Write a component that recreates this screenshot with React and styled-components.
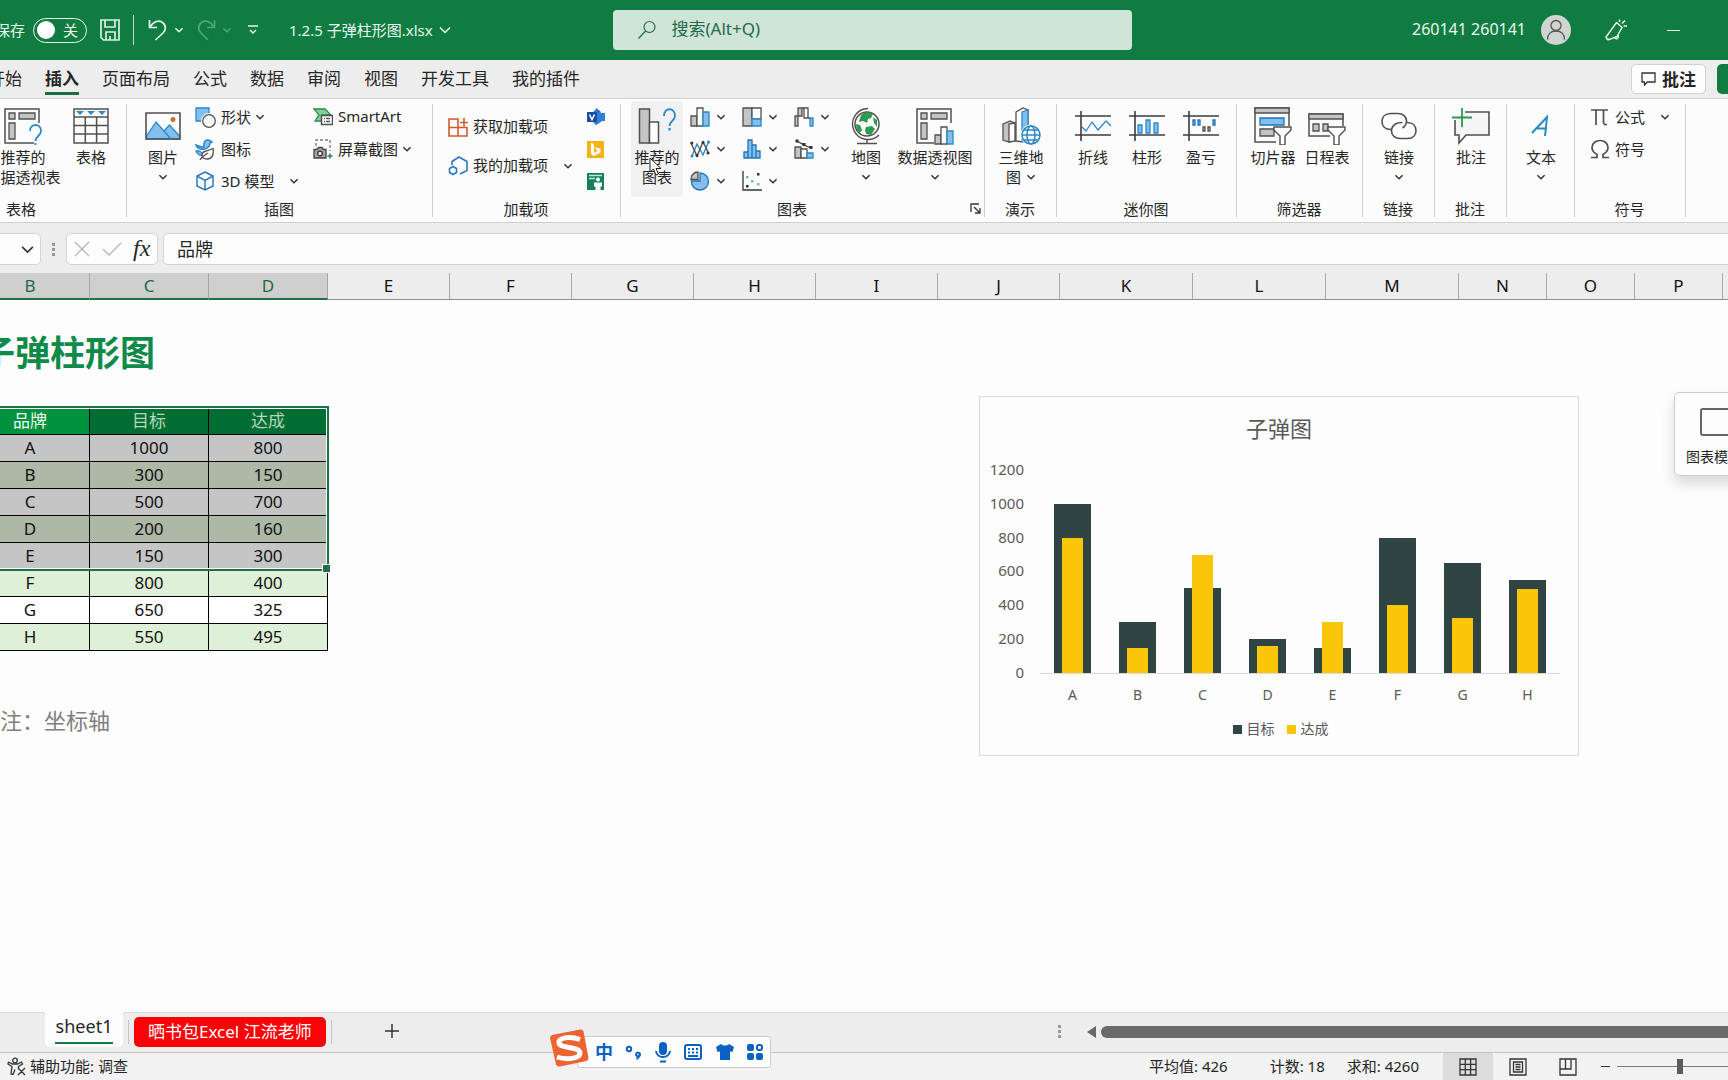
import React, { useState } from 'react';
import styled, { createGlobalStyle, css } from 'styled-components';

const GlobalStyle = createGlobalStyle`
  * {
    box-sizing: border-box;
  }

  body {
    margin: 0;
    overflow: hidden;
    font-family: 'Noto Sans', 'Noto Sans CJK SC', sans-serif;
    font-size: 15px;
    color: #262626;
  }

  button, input {
    font: inherit;
    color: inherit;
    margin: 0;
    padding: 0;
    border: 0;
    background: none;
  }

  svg {
    display: block;
    flex: none;
  }
`;

const GREEN = '#107c41';
const BLUE = '#2b88c8';
const SKY = '#83beec';
const INK = '#505050';
const GREY = '#c4c4c4';

/* ---------- data ---------- */

const tabs = ['开始', '插入', '页面布局', '公式', '数据', '审阅', '视图', '开发工具', '我的插件'];

const columns = [
  ['B', 119], ['C', 119], ['D', 119],
  ['E', 122], ['F', 122], ['G', 122], ['H', 122], ['I', 122], ['J', 122],
  ['K', 133], ['L', 133], ['M', 133],
  ['N', 88], ['O', 88], ['P', 88], ['Q', 88],
];

const brands = [
  { name: 'A', target: 1000, actual: 800 },
  { name: 'B', target: 300, actual: 150 },
  { name: 'C', target: 500, actual: 700 },
  { name: 'D', target: 200, actual: 160 },
  { name: 'E', target: 150, actual: 300 },
  { name: 'F', target: 800, actual: 400 },
  { name: 'G', target: 650, actual: 325 },
  { name: 'H', target: 550, actual: 495 },
];

const AXIS_MAX = 1200;
const ticks = [1200, 1000, 800, 600, 400, 200, 0];
const selectedRows = 5;

/* ---------- icons ---------- */

const Svg = ({ w = 20, h = w, children, ...rest }) => (
  <svg width={w} height={h} viewBox={`0 0 ${w} ${h}`} fill="none" stroke={INK} strokeWidth="1.3" aria-hidden="true" {...rest}>
    {children}
  </svg>
);

const Chevron = ({ size = 10, color = '#333' }) => (
  <svg width={size} height={size} viewBox="0 0 10 10" fill="none" stroke={color} strokeWidth={size > 10 ? 1.1 : 1.5} aria-hidden="true">
    <path d="M1.4 3.2 5 6.8l3.6-3.6" />
  </svg>
);

const SaveIcon = () => (
  <Svg w={22} h={24} stroke="#d9f0e2" strokeWidth="1.7">
    <path d="M2 2h18v20H4.5L2 19.5zM6 2v7h10V2M7 22v-8h9v8M11 18v4" />
  </Svg>
);

const UndoIcon = () => (
  <Svg w={20} h={24} stroke="#e4f5ea" strokeWidth="1.7">
    <path d="M1.500 2v7.500H9M2 9C6 3 11 2 14.500 4.500 18.500 7.500 18 12 15 15l-7.500 7" />
  </Svg>
);

const RedoIcon = () => (
  <Svg w={20} h={24} stroke="#4fa677" strokeWidth="1.7">
    <path d="M18.500 2v7.500H11M18 9C14 3 9 2 5.500 4.500 1.500 7.500 2 12 5 15l7 7" />
  </Svg>
);

const MoreIcon = () => (
  <Svg w={12} h={12} stroke="#e4f5ea" strokeWidth="1.5">
    <path d="M1 2h10M3 6l3 3 3-3" />
  </Svg>
);

const SearchIcon = () => (
  <Svg w={20} h={20} stroke="#2a6b4a" strokeWidth="1.2">
    <circle cx="12.500" cy="7" r="5.500" />
    <path d="M8.500 11 1.500 18.500" />
  </Svg>
);

const PersonIcon = () => (
  <Svg w={30} stroke="#555">
    <circle cx="15" cy="10.500" r="5" />
    <path d="M6.500 24.500c0-5.500 3.500-8.500 8.500-8.500s8.500 3 8.500 8.500" />
  </Svg>
);

const PenIcon = () => (
  <Svg w={22} h={22} stroke="#e4f5ea" strokeWidth="1.5">
    <path d="M11.500 3.500 17 8.500l-5 9-7.500 3-2.500-.5-1-2zM4.500 20.500c-1.500 1-3-.5-3-2M9.500 18.500c1.500 2.500 4.500 1 3.500-2.500M14.500 3V0.500M17 4.500l3-3M18.500 7H22" />
  </Svg>
);

const CommentIcon = () => (
  <Svg w={15} h={14} stroke="#333">
    <path d="M1 1h13v9H6.500L3.500 13v-3H1z" />
  </Svg>
);

const PivotRecommendIcon = () => (
  <Svg w={39} h={38}>
    <path d="M30 36H1V2h34v14" strokeWidth="1.500" />
    <g fill={GREY}>
      <path d="M5 6h6v6H5zM15 6h16v6H15zM5 16h6v16H5z" />
    </g>
    <path d="M26 24c0-8 11-8 11 0 0 5-5.500 5-5.500 10" stroke={BLUE} strokeWidth="1.800" />
    <path d="M31.500 36v2" stroke={BLUE} strokeWidth="2" />
  </Svg>
);

const TableIcon = () => (
  <Svg w={36} h={36}>
    <path d="M1 1h34v34H1zM1 9h34M1 17.500h34M1 26h34M12.300 9v26M23.600 9v26" strokeWidth="1.500" />
    <path d="M3 3h8l-4 4zM14 3h8l-4 4zM25 3h8l-4 4z" fill={BLUE} stroke="none" />
  </Svg>
);

const PictureIcon = () => (
  <Svg w={36} h={28}>
    <path d="M1.500 24 11 10l8 9 5.500-6 10 11v3h-33z" fill={SKY} stroke={BLUE} />
    <path d="M1 1h34v26H1z" strokeWidth="1.600" />
    <circle cx="28" cy="7.500" r="2.500" fill="#c9702a" stroke="none" />
    <path d="M19 19l7 8" stroke={BLUE} />
  </Svg>
);

const ShapesIcon = () => (
  <Svg w={21}>
    <path d="M1 1h13v13H1z" fill={SKY} stroke={BLUE} />
    <circle cx="14" cy="14" r="8" fill="#fcfcfc" stroke="none" />
    <circle cx="14" cy="14" r="6.300" />
  </Svg>
);

const BirdIcon = () => (
  <Svg w={21}>
    <path d="M1 6c2 1 5 2 8 2 0-3-1-6 3-7 3-.500 4 1 5 2l-2 1c0 4-2 5-5 6-4 1-8-1-9-4z" fill={SKY} stroke={BLUE} strokeWidth="1.500" />
    <path d="M1 12c3-1 6 1 7 4-3 1-6-1-7-4z" fill={SKY} stroke={BLUE} />
    <path d="M18 9.500c1 7-1 10.500-6 10.500-4 0-5-2-5-4 0-5 6-3.500 11-6.500zM5 21c2-4 5-5 8-7" fill="#fcfcfc" />
  </Svg>
);

const CubeIcon = () => (
  <Svg w={21} h={20} stroke="#2b79c2" strokeWidth="1.500">
    <path d="M10 1l8 4v10l-8 4-8-4V5zM2 5l8 4.500L18 5M10 9.500V19" />
  </Svg>
);

const SmartArtIcon = () => (
  <Svg w={20}>
    <path d="M1 2h11l6 6h-9v6H2l4-6z" fill="#7fd09b" stroke="#2d8a4e" />
    <path d="M8.500 8.500h11v9h-11z" fill="#fff" strokeWidth="1.500" />
    <path d="M11 11.500h1M13 11.500h4M11 14.500h1M13 14.500h4" />
  </Svg>
);

const ScreenshotIcon = () => (
  <Svg w={20}>
    <path d="M3 7V1h14v11" strokeDasharray="3 2" stroke="#777" />
    <path d="M1 10.500h3l1.500-2H9l1.500 2H13V19H1z" fill="#a5a5a5" stroke="#444" />
    <circle cx="7" cy="14.500" r="2.300" fill="#eee" stroke="#333" />
    <path d="M14.500 17h5M17 14.500v5" stroke="#2d8a4e" strokeWidth="1.600" />
  </Svg>
);

const AddInIcon = () => (
  <Svg w={20} stroke="#d05a2c" strokeWidth="1.600">
    <path d="M1 2h9v17H1zM1 10.500h18V19H10V2M12 5.500h8M16 1v8.500" />
  </Svg>
);

const MyAddInIcon = () => (
  <Svg w={20} stroke="#2b79c2" strokeWidth="1.600">
    <path d="M4 9V5.500L11 1l8 4.500v9L12 18M5 10.500l3.500 2v4L5 18.500l-3.500-2v-4z" />
  </Svg>
);

const VisioIcon = () => (
  <Svg w={18} stroke="none">
    <path d="M9 0l5 4-5 4zM9 17l6-4-6-4z" fill="#1b4fa3" />
    <path d="M9 1l5 4h4v8h-4l-5 4-3-3V4z" fill="#2f7fd6" />
    <path d="M0 4h10v10H0z" fill="#1a4fa0" />
    <path d="M2.500 6.500l2.500 5 2.500-5" stroke="#fff" strokeWidth="1.500" />
  </Svg>
);

const BingIcon = () => (
  <Svg w={17} stroke="none">
    <path d="M0 0h17v17H0z" fill="#f5b21b" />
    <path d="M4 2l3 1v9l4-2.500-2-1-1-2.500 5.500 2v3.500L7 15l-3-2z" fill="#fff" />
  </Svg>
);

const PeopleGraphIcon = () => (
  <Svg w={17} stroke="none">
    <path d="M0 0h17v17H0z" fill="#14805e" />
    <path d="M2 2.500h13M2 5.500h6" stroke="#bfe6d5" strokeWidth="1.400" />
    <circle cx="11" cy="6.500" r="2" fill="#fff" />
    <path d="M7 9.500h8v4h-1.500V17H8.500v-3.500H7z" fill="#fff" />
  </Svg>
);

const ChartRecommendIcon = () => (
  <Svg w={38} h={38}>
    <path d="M1.500 2h10v34h-10z" fill={GREY} strokeWidth="1.500" />
    <path d="M11.500 15h9v21h-9z" fill="#fcfcfc" strokeWidth="1.500" />
    <path d="M26 9c0-9 11-9 11 0 0 5-5.500 5-5.500 10" stroke={BLUE} strokeWidth="1.800" />
    <path d="M31.500 21v2.500" stroke={BLUE} strokeWidth="2.200" />
  </Svg>
);

const ColumnIcon = () => (
  <Svg w={20}>
    <path d="M1 9h6v10H1z" fill={GREY} />
    <path d="M7 1h6v18H7z" fill="#fff" />
    <path d="M13 5h6v14h-6z" fill={SKY} stroke={BLUE} />
  </Svg>
);

const TreemapIcon = () => (
  <Svg w={20}>
    <path d="M1 1h9v18H1z" fill={GREY} />
    <path d="M10 1h9v11h-9z" fill="#fff" />
    <path d="M10 12h9v7h-9z" fill={SKY} stroke={BLUE} />
  </Svg>
);

const WaterfallIcon = () => (
  <Svg w={20}>
    <path d="M1 9h3v10H1zM4 1h4v8H4z" fill={GREY} />
    <path d="M10 1h4v10h-4z" fill="#fff" />
    <path d="M8 1h2M14 11h2" />
    <path d="M16 11h3v8h-3z" fill={SKY} stroke={BLUE} />
  </Svg>
);

const LineIcon = () => (
  <Svg w={20}>
    <path d="M2 17l5-12 6 11 6-14" stroke={BLUE} strokeWidth="1.400" />
    <path d="M1 4l6 13 6-14 6 12" strokeWidth="1.400" />
    <g fill="#333" stroke="none">
      <circle cx="1.800" cy="4" r="1.500" /><circle cx="7" cy="16.500" r="1.500" />
      <circle cx="13" cy="3.500" r="1.500" /><circle cx="18" cy="14" r="1.500" />
    </g>
    <g fill={BLUE} stroke="none">
      <circle cx="2" cy="17" r="1.500" /><circle cx="18.500" cy="3" r="1.500" />
    </g>
  </Svg>
);

const HistogramIcon = () => (
  <Svg w={20} stroke="#1f73b8">
    <path d="M2 13h4v6H2zM6 1h4v18H6zM10 6h4v13h-4zM14 12h4v7h-4z" fill={SKY} />
  </Svg>
);

const ComboIcon = () => (
  <Svg w={20}>
    <path d="M1 8h6v11H1z" fill={GREY} />
    <path d="M7 10h6v9H7z" fill="#fff" />
    <path d="M13 14h6v5h-6z" fill={SKY} stroke={BLUE} />
    <path d="M3 2l7 4 7 3" stroke="#333" />
    <path d="M1.500 0.500h3v3h-3zM8.500 4h3v3h-3zM15.500 7h3v3h-3z" fill="#333" stroke="none" />
  </Svg>
);

const PieIcon = () => (
  <Svg w={20}>
    <path d="M10 10V2a8.500 8.500 0 1 1-8.500 8z" fill={SKY} stroke="#1f73b8" />
    <path d="M8 8.500H1C1 4 4 1 8 1z" fill={GREY} />
  </Svg>
);

const ScatterIcon = () => (
  <Svg w={20}>
    <path d="M1 0v19h19" stroke="#333" />
    <g fill="#333" stroke="none">
      <path d="M4 14h2.500v2.500H4zM15 2h2.500v2.500H15z" />
    </g>
    <g fill="#7db4c8" stroke="none">
      <path d="M4 5h2.500v2.500H4zM9 9h2.500v2.500H9zM15 12h2.500v2.500H15z" />
    </g>
  </Svg>
);

const GlobeIcon = () => (
  <Svg w={30} h={38}>
    <circle cx="16" cy="17" r="12" strokeWidth="1.500" />
    <g fill="#2f9a51" stroke="none">
      <path d="M10 8c4-3 9-3 12-1l-2 4-3 1-1 4-4-2-4 1zM22 10l4 3v7l-3-4zM5 17l4 1 2 5-2 3c-3-2-4-5-4-9zM15 20l6-1 3 3-4 6-5-1-1-4z" />
    </g>
    <path d="M17 1.500A15.500 15.500 0 1 0 28 28M16 32v4M6 36.500h20" strokeWidth="1.400" />
  </Svg>
);

const PivotChartIcon = () => (
  <Svg w={39} h={38}>
    <path d="M18 36H1V2h34v14" strokeWidth="1.500" />
    <g fill={GREY}>
      <path d="M5 6h6v6H5zM15 6h16v6H15zM5 16h6v16H5z" />
      <path d="M19 28h6v9h-6z" />
    </g>
    <path d="M25 20h6v17h-6z" fill="#fff" />
    <path d="M31 24h6v13h-6z" fill={SKY} stroke={BLUE} />
  </Svg>
);

const Map3DIcon = () => (
  <Svg w={39} h={38}>
    <path d="M1 17l7-3 5 2v18l-6 1-6-2z" fill={GREY} />
    <path d="M7 17v18l6-1V16z" fill="#fff" />
    <path d="M14 5l7-4 5 2v20l-5 12-7-1z" fill="#fff" />
    <path d="M20 5l6-2v20l-6 12z" fill={SKY} stroke={BLUE} />
    <circle cx="29" cy="28" r="10.500" fill="#fcfcfc" stroke="none" />
    <g stroke={BLUE} strokeWidth="1.500">
      <circle cx="29" cy="28" r="9" />
      <ellipse cx="29" cy="28" rx="4" ry="9" />
      <path d="M20 28h18M21.500 23h15M21.500 33h15" />
    </g>
  </Svg>
);

const SparkIcon = ({ children }) => (
  <Svg w={36} h={32}>
    <path d="M0 6h36M0 25h36M6 1v30" stroke="#3c3c3c" strokeWidth="1.600" />
    {children}
  </Svg>
);

const SlicerIcon = () => (
  <Svg w={38} h={38}>
    <path d="M22 35H1V1h34v18" strokeWidth="1.500" />
    <path d="M1 1h34v5H1zM6 22h14v7H6z" fill={GREY} />
    <path d="M6 11h24v7H6z" fill={SKY} stroke="#1f73b8" />
    <path d="M20 20h17v3l-6 6v9h-5v-9l-6-6z" fill="#fff" strokeWidth="1.400" />
  </Svg>
);

const TimelineIcon = () => (
  <Svg w={38} h={38}>
    <path d="M22 29H1V7h34v12" strokeWidth="1.500" />
    <path d="M1 7h34v5H1zM5 17h6v7H5zM15 17h5v7h-5z" fill={GREY} />
    <path d="M20 20h17v3l-6 6v9h-5v-9l-6-6z" fill="#fff" strokeWidth="1.400" />
  </Svg>
);

const LinkIcon = () => (
  <Svg w={36} h={28} strokeWidth="1.600">
    <path d="M10 17.500C4 17.500 1 14 1 9.500S4 1.500 9.500 1.500H17c5 0 8.500 3 8.500 7.500 0 3-1.500 5.500-4 7" />
    <path d="M26 10.500c6 0 9 3.500 9 8s-3 8-8.500 8H19c-5 0-8.500-3-8.500-7.500 0-3 1.500-5.500 4-7 2-1.500 4-1.500 7-1.500" />
  </Svg>
);

const NewCommentIcon = () => (
  <Svg w={38} h={38}>
    <path d="M12 5h25v23H14l-7 8v-8H3V13" fill="#f5f5f5" stroke="none" />
    <path d="M13 5h24v23H14l-7 8v-8H3V13" strokeWidth="1.600" />
    <path d="M10 1v19M0 10.500h20" stroke="#2a9a50" strokeWidth="1.800" />
  </Svg>
);

const TextArtIcon = () => (
  <Svg w={20} h={22} stroke={BLUE} strokeWidth="2">
    <path d="M1 18 16 2l-2 19M6 13.500h10" />
  </Svg>
);

const PiIcon = () => (
  <Svg w={20} h={20} strokeWidth="1.700">
    <path d="M1 3h17M6 3v15M13.500 3v12c0 2 1 3 3.500 2.500" />
  </Svg>
);

const OmegaIcon = () => (
  <Svg w={20} h={20} strokeWidth="1.700">
    <path d="M1 18.500h6v-3C3.500 13.500 2 11 2 8.500 2 4.500 5.500 1.500 10 1.500s8 3 8 7c0 2.500-1.500 5-5 7v3h6" />
  </Svg>
);

const LauncherIcon = () => (
  <Svg w={11} h={11} stroke="#333">
    <path d="M1 9V1h8M4 4l6 6M10 5v5H5" />
  </Svg>
);

const PointerIcon = () => (
  <Svg w={13} h={19} stroke="#222" strokeWidth="1">
    <path d="M1 1v14l3.500-3 2.500 6 2.500-1L7 11.500h5z" fill="#fff" />
  </Svg>
);

const AccessIcon = () => (
  <Svg w={20} h={20} stroke="#333">
    <circle cx="8" cy="3.500" r="2.300" />
    <path d="M1.500 5l4 2h5l4-2 1 2-4 2.500V12M1.500 5l-.5 2 4 2.500L4 17l2 .5 2-5M11 11l7 7M18 11l-7 7" />
  </Svg>
);

const SogouLogo = () => (
  <Svg w={40} h={40} stroke="none">
    <path d="M3 7 31 1.500Q34 1 34.500 3.500L39.500 30q0 2-2 3L11 38.500q-3 .5-4-2L1 10q0-2 2-3z" fill="#ec6530" />
    <path d="M31 11.500C20 7.500 9 10 10 15c1 6 21 3 21 10 0 6-14 7-23 4" stroke="#fff" strokeWidth="5" />
  </Svg>
);

const PunctIcon = () => (
  <Svg w={18} h={18} stroke="#0a62c4" strokeWidth="2">
    <circle cx="5" cy="6" r="2.200" />
    <path d="M14 9.500a2 2 0 1 0 .1 0M15.500 11c0 2-1 4-3 5" />
  </Svg>
);

const MicIcon = () => (
  <Svg w={18} h={22} stroke="#0a62c4" strokeWidth="2">
    <rect x="6" y="2" width="6" height="11" rx="3" fill="#0a62c4" />
    <path d="M2 10c1 8 13 8 14 0M6 20.500h6" />
  </Svg>
);

const KeyboardIcon = () => (
  <Svg w={20} h={18} stroke="#0a62c4" strokeWidth="2">
    <rect x="2" y="2" width="16" height="14" rx="2" />
    <path d="M5 6h10M5 9.500h10" strokeDasharray="2 2" />
    <path d="M5 13h10" />
  </Svg>
);

const ShirtIcon = () => (
  <Svg w={20} h={18} stroke="none">
    <path d="M6 1c2 2 6 2 8 0l5 3-1.500 5L15 8.500V17H5V8.500L2.500 9 1 4z" fill="#0a62c4" />
  </Svg>
);

const AppsIcon = () => (
  <Svg w={18} h={18} stroke="none" fill="#0a62c4">
    <rect x="1" y="1" width="7" height="7" rx="2" />
    <rect x="1" y="10" width="7" height="7" rx="2" />
    <rect x="10" y="10" width="7" height="7" rx="2" />
    <rect x="11" y="2" width="5" height="5" rx="2" fill="none" stroke="#0a62c4" strokeWidth="2" />
  </Svg>
);

/* ---------- title bar ---------- */

const Page = styled.div`
  display: flex;
  flex-direction: column;
  height: 100vh;
  overflow: hidden;
  background: #ededed;
`;

/* optical centring of text beside icons */
const Text = styled.span`
  padding-bottom: 2px;
`;

const TitleBar = styled.header`
  display: flex;
  align-items: center;
  height: 60px;
  flex: none;
  background: ${GREEN};
  color: #e8f6ed;
`;

const QuickAccess = styled.div`
  display: flex;
  align-items: center;
  flex: none;
  width: calc(35.5% + 5px);
  margin-left: -5px;
  white-space: nowrap;
`;

const AutoSave = styled.label`
  display: flex;
  align-items: center;
  gap: 8px;
`;

const Switch = styled.span`
  position: relative;
  display: flex;
  align-items: center;
  justify-content: flex-end;
  width: 54px;
  height: 25px;
  padding-right: 8px;
  border: 1px solid #e8f6ed;
  border-radius: 13px;

  input {
    position: absolute;
    inset: 0;
    opacity: 0;
  }

  &::before {
    content: '';
    position: absolute;
    left: 3px;
    width: 18px;
    height: 18px;
    border-radius: 50%;
    background: #fff;
  }
`;

const BarButton = styled.button`
  display: flex;
  align-items: center;
  gap: ${p => p.$gap || 6}px;
  margin-left: ${p => p.$space}px;
`;

const BarRule = styled.span`
  width: 1px;
  height: 30px;
  margin-left: 12px;
  background: #b9dcc8;
`;

const SearchBox = styled.label`
  display: flex;
  align-items: center;
  flex: none;
  width: 30%;
  gap: 14px;
  height: 40px;
  margin-bottom: 1px;
  padding-left: 24px;
  border-radius: 4px;
  background: #cfe5d8;

  input {
    flex: 1;
    min-width: 0;
    padding-bottom: 2px;
    font-size: 17px;
  }

  input::placeholder {
    color: #23694a;
    opacity: 1;
  }
`;

const Account = styled.div`
  display: flex;
  align-items: center;
  justify-content: flex-end;
  flex: 1;
  min-width: 0;
  overflow: hidden;
  font-size: 16px;
`;

const Avatar = styled.span`
  margin: 0 34px 0 15px;
  border-radius: 50%;
  background: #d0d5d1;
`;

const Minimize = styled.button`
  width: 13px;
  height: 20px;
  margin: 0 48px 0 40px;
  background: linear-gradient(#e4f5ea, #e4f5ea) center / 13px 1px no-repeat;
`;

/* ---------- ribbon ---------- */

const TabBar = styled.nav`
  display: flex;
  align-items: center;
  justify-content: space-between;
  height: 38px;
  flex: none;
`;

const Tabs = styled.div`
  display: flex;
  gap: 23px;
  margin-left: -12px;
`;

const Tab = styled.button`
  height: 38px;
  padding-top: 3px;
  border-bottom: 3px solid transparent;
  font-size: 17px;
  line-height: 32px;
  white-space: nowrap;

  ${p => p.$active && css`
    font-weight: 700;
    background: linear-gradient(#1d6b41, #1d6b41) bottom / 100% 3px no-repeat;
  `}
`;

const TabActions = styled.div`
  display: flex;
  gap: 11px;
`;

const CommentsButton = styled.button`
  display: flex;
  align-items: center;
  justify-content: center;
  gap: 6px;
  width: 75px;
  height: 30px;
  border: 1px solid #d2d2d2;
  border-radius: 5px;
  background: #fdfdfd;
  font-size: 17px;
  font-weight: 700;
`;

const ShareButton = styled.button`
  width: 11px;
  height: 30px;
  border-radius: 5px 0 0 5px;
  background: ${GREEN};
`;

const Ribbon = styled.section`
  display: flex;
  flex: none;
  height: 125px;
  padding-top: 2px;
  border-top: 1px solid #cfcfcf;
  border-bottom: 1px solid #cfcfcf;
  background: #fcfcfc;
`;

const Group = styled.div`
  position: relative;
  display: flex;
  flex-direction: column;
  flex: none;
  width: ${p => p.$width}px;
  margin-left: ${p => p.$bleed ? -p.$bleed : 0}px;

  &::after {
    content: '';
    position: absolute;
    right: 0;
    top: 3px;
    bottom: 5px;
    width: 1px;
    background: #d0d0d0;
  }
`;

const GroupBody = styled.div`
  display: flex;
  justify-content: ${p => p.$align || 'center'};
  height: 96px;
  padding: 0 ${p => p.$right || 0}px 0 ${p => p.$left || 0}px;
`;

const GroupLabel = styled.div`
  display: flex;
  align-items: center;
  justify-content: center;
  height: 22px;
  padding-right: ${p => p.$launcher ? 22 : 2}px;

  button {
    position: absolute;
    right: 4px;
  }
`;

const BigButton = styled.button`
  position: relative;
  display: flex;
  flex-direction: column;
  align-items: center;
  flex: none;
  width: ${p => p.$width || 60}px;
  height: 96px;
  border-radius: 4px;
  line-height: 20px;
  white-space: nowrap;
  background: ${p => p.$hover ? '#f1f1f1' : 'none'};
`;

const BigIcon = styled.span`
  display: flex;
  align-items: center;
  height: 40px;
  margin: 5px 0 1px;
`;

const BigLine = styled.span`
  display: flex;
  align-items: center;
  justify-content: center;
  gap: 5px;
  height: 20px;
`;

const Pointer = styled.span`
  position: absolute;
  left: 18px;
  top: 56px;
`;

const Stack = styled.div`
  display: flex;
  flex-direction: column;
  flex: none;
  width: ${p => p.$width ? `${p.$width}px` : 'auto'};
  padding: ${p => p.$top || 0}px 0 0 ${p => p.$left || 0}px;
`;

const SmallButton = styled.button`
  display: flex;
  align-items: center;
  gap: ${p => p.$gap}px;
  height: ${p => p.$tall ? 39 : 32}px;
  white-space: nowrap;
`;

const SmallLabel = styled.span`
  display: flex;
  align-items: center;
  gap: 5px;
`;

const ChartGrid = styled.div`
  display: grid;
  grid-template-columns: repeat(3, 52px);
  grid-auto-rows: 32px;
  margin-left: 7px;
`;

const Big = ({ icon, lines, drop, inlineDrop, children, ...rest }) => (
  <BigButton {...rest}>
    <BigIcon>{icon}</BigIcon>
    {lines.map((line, i) => (
      <BigLine key={line}>
        {line}
        {inlineDrop && i === lines.length - 1 && <Chevron />}
      </BigLine>
    ))}
    {drop && <BigLine><Chevron /></BigLine>}
    {children}
  </BigButton>
);

const Small = ({ icon, text, drop, split, tall, label }) => (
  <SmallButton $gap={split ? 15 : (text ? 4 : 6)} $tall={tall} aria-label={label}>
    <SmallLabel>{icon}{text && <Text>{text}</Text>}</SmallLabel>
    {(drop || split) && <Chevron />}
  </SmallButton>
);

/* ---------- formula bar ---------- */

const FormulaBar = styled.div`
  display: flex;
  align-items: flex-start;
  flex: none;
  height: 50px;
  padding-top: 10px;
`;

const Box = styled.div`
  display: flex;
  align-items: center;
  height: 32px;
  border: 1px solid #d4d4d4;
  border-radius: 5px;
  background: #fdfdfd;
`;

const NameBox = styled(Box)`
  justify-content: flex-end;
  width: 49px;
  margin-left: -8px;
  padding-right: 5px;
`;

const Grip = styled.span`
  width: 3px;
  height: 13px;
  margin: ${p => p.$margin};
  background: repeating-linear-gradient(#999 0 3px, transparent 3px 5px);
`;

const FormulaTools = styled(Box)`
  gap: 11px;
  width: 92px;
  padding: 0 5px 0 6px;
`;

const Fx = styled.span`
  padding-bottom: 2px;
  font: italic 400 24px/28px 'Liberation Serif', serif;
`;

const FormulaInput = styled.input`
  flex: 1;
  min-width: 0;
  height: 32px;
  margin-left: 5px;
  padding: 0 0 2px 13px;
  border: 1px solid #d4d4d4;
  border-right: 0;
  border-radius: 5px 0 0 5px;
  background: #fdfdfd;
  font-size: 18px;
`;

/* ---------- sheet ---------- */

const ColumnHeads = styled.div`
  display: flex;
  flex: none;
  height: 27px;
  margin-left: -29px;
`;

const ColumnHead = styled.div`
  flex: none;
  width: ${p => p.$width}px;
  border-right: 1px solid #a9a9a9;
  border-bottom: 1px solid #8f8f8f;
  font-size: 17px;
  line-height: 26px;
  text-align: center;
  color: #111;

  ${p => p.$selected && css`
    border-bottom: 2px solid #1f7246;
    background: #cfcfcf;
    color: #1e6b47;
  `}
`;

const Sheet = styled.main`
  position: relative;
  flex: 1;
  min-height: 0;
  overflow: hidden;
  padding-top: 31px;
  background: #fdfdfd;
`;

const SheetTitle = styled.h1`
  margin: 0 0 33px -20px;
  font-size: 35px;
  font-weight: 600;
  line-height: 44px;
  color: #0f8b49;
`;

const TableWrap = styled.div`
  position: relative;
  width: 357px;
  margin-left: -29px;
`;

const DataTable = styled.table`
  width: 100%;
  border-spacing: 0;
  table-layout: fixed;
  font-size: 17px;
  color: #111;
`;

const HeadCell = styled.th`
  height: 27px;
  padding: 0;
  border: solid #000;
  border-width: 0 1px 1px 0;
  background: ${p => p.$active ? '#00923f' : '#006e32'};
  color: ${p => p.$active ? '#f2fbf5' : '#b5d6bd'};
  font-weight: 400;
  line-height: 24px;
`;

const Cell = styled.td`
  height: 27px;
  padding: 0;
  border: solid #000;
  border-width: 0 1px 1px 0;
  background: ${p => p.$selected
    ? (p.$striped ? '#adb8a6' : '#c5c5c5')
    : (p.$striped ? '#dff0d8' : '#fff')};
  line-height: 24px;
  text-align: center;
`;

const Selection = styled.div`
  position: absolute;
  top: -2px;
  left: 0;
  right: -1px;
  height: 165px;
  border: 2px solid #1f7246;
  box-shadow: inset 0 0 0 1px #fff;

  &::after {
    content: '';
    position: absolute;
    right: -4px;
    bottom: -4px;
    width: 7px;
    height: 7px;
    border: 1px solid #fff;
    background: #1f7246;
  }
`;

const Note = styled.p`
  margin: 53px 0 0;
  font-size: 22px;
  line-height: 32px;
  color: #7f7f7f;
`;

const Chart = styled.figure`
  position: absolute;
  left: 979px;
  top: 96px;
  width: 600px;
  height: 360px;
  margin: 0;
  border: 1px solid #d9d9d9;
  color: #595959;
`;

const ChartTitle = styled.figcaption`
  height: 73px;
  padding-top: 15px;
  font-size: 22px;
  line-height: 32px;
  text-align: center;
`;

const Plot = styled.div`
  display: flex;
  height: 203px;
`;

const Ticks = styled.div`
  display: flex;
  flex-direction: column;
  justify-content: space-between;
  width: 44px;
  height: 223px;
  margin: -11px 16px 0 0;
  line-height: 20px;
  text-align: right;
`;

const Bars = styled.div`
  display: grid;
  grid-template-columns: repeat(8, 65px);
  height: 204px;
  border-bottom: 1px solid #d9d9d9;
`;

const Category = styled.div`
  display: grid;
  grid-template-rows: 203px 44px;
  justify-items: center;
  align-items: end;
  line-height: 44px;
`;

const Bar = styled.div`
  grid-area: 1 / 1;
  width: ${p => p.$actual ? 21 : 37}px;
  background: ${p => p.$actual ? '#fcc608' : '#304543'};
`;

const CategoryName = styled.div`
  grid-area: 2 / 1;
  font-size: 14px;
`;

const Legend = styled.div`
  display: flex;
  justify-content: center;
  gap: 12px;
  margin-top: 45px;
  padding-left: 3px;
  font-size: 14px;
  line-height: 22px;
`;

const LegendItem = styled.span`
  display: flex;
  align-items: center;
  gap: 5px;

  &::before {
    content: '';
    width: 9px;
    height: 9px;
    background: ${p => p.$color};
  }
`;

const TemplateCard = styled.button`
  position: absolute;
  left: 1674px;
  top: 92px;
  width: 86px;
  height: 84px;
  padding: 5px 0 0 11px;
  border: 1px solid #cdcdcd;
  border-radius: 5px;
  background: #fdfdfd;
  box-shadow: 0 8px 14px rgba(0, 0, 0, 0.14);
  font-size: 14px;
  text-align: left;
  white-space: nowrap;

  &::before {
    content: '';
    display: block;
    width: 36px;
    height: 24px;
    margin: 0 0 10px 14px;
    border: 2px solid #666;
    border-radius: 3px;
  }
`;

/* ---------- bottom bars ---------- */

const SheetBar = styled.div`
  display: flex;
  flex: none;
  height: 40px;
  border-top: 1px solid #d8d8d8;
`;

const SheetTab = styled.button`
  width: 78px;
  height: 35px;
  margin: -1px 5px 0 45px;
  border-radius: 0 0 5px 5px;
  background: #fdfdfd;
  font-size: 18px;

  span {
    display: block;
    height: 31px;
    margin: 0 10px 3px;
    border-bottom: 2px solid ${GREEN};
    line-height: 27px;
  }
`;

const RedTab = styled.button`
  height: 30px;
  margin: 4px 5px 0;
  padding: 0 14px;
  border-radius: 5px;
  background: #fb0306;
  color: #fff;
  font-size: 17px;
  line-height: 30px;
  white-space: nowrap;
`;

const TabRule = styled.span`
  width: 1px;
  height: 24px;
  margin-top: 7px;
  background: #c4c4c4;
`;

const AddSheet = styled.button`
  margin-left: 53px;
  padding-bottom: 3px;
`;

const ScrollArea = styled.div`
  display: flex;
  align-items: center;
  flex: none;
  width: 670px;
  margin-left: auto;
  padding-bottom: 2px;
`;

const ScrollArrow = styled.button`
  border: solid transparent;
  border-width: 6px 9px 6px 0;
  border-right-color: #666;
`;

const ScrollThumb = styled.div`
  flex: 1;
  height: 12px;
  margin-left: 5px;
  border-radius: 6px 0 0 6px;
  background: #6a6a6a;
`;

const StatusBar = styled.footer`
  display: flex;
  align-items: center;
  flex: none;
  height: 28px;
  border-top: 1px solid #c3c3c3;
  background: #f2f2f2;
  white-space: nowrap;
`;

const Access = styled.button`
  display: flex;
  align-items: center;
  gap: 3px;
  margin: 0 auto 0 7px;
`;

const Stats = styled.div`
  display: flex;
  margin-right: ${p => p.$space}px;
`;

const ViewButton = styled.button`
  display: flex;
  align-items: center;
  justify-content: center;
  width: 50px;
  height: 27px;
  background: ${p => p.$active ? '#dcdcdc' : 'none'};
`;

const ZoomOut = styled.button`
  width: 9px;
  height: 20px;
  margin: 0 7px 0 8px;
  background: linear-gradient(#333, #333) center / 9px 1px no-repeat;
`;

const Zoom = styled.input`
  appearance: none;
  width: 111px;
  height: 16px;
  background: linear-gradient(#777, #777) center / 100% 1px no-repeat;

  &::-webkit-slider-thumb {
    appearance: none;
    width: 6px;
    height: 15px;
    background: #5c5c5c;
  }
`;

const InputBar = styled.div`
  position: absolute;
  left: 549px;
  bottom: 12px;
  display: flex;
  align-items: flex-end;
`;

const InputTools = styled.div`
  display: flex;
  align-items: center;
  justify-content: space-between;
  width: 194px;
  height: 32px;
  margin-left: -12px;
  padding: 0 6px 0 17px;
  border: 1px solid #cbcbcb;
  border-radius: 3px;
  background: #fdfdfd;
  color: #0a62c4;
  font-size: 18px;
  font-weight: 700;
  line-height: 28px;
`;

const Logo = styled.span`
  position: relative;
  z-index: 1;
`;

function BulletChart() {
  const height = value => `${(value / AXIS_MAX) * 100}%`;
  return (
    <Chart>
      <ChartTitle>子弹图</ChartTitle>
      <Plot>
        <Ticks>
          {ticks.map(t => <span key={t}>{t}</span>)}
        </Ticks>
        <Bars>
          {brands.map(b => (
            <Category key={b.name}>
              <Bar style={{ height: height(b.target) }} />
              <Bar $actual style={{ height: height(b.actual) }} />
              <CategoryName>{b.name}</CategoryName>
            </Category>
          ))}
        </Bars>
      </Plot>
      <Legend>
        <LegendItem $color="#304543">目标</LegendItem>
        <LegendItem $color="#fcc608">达成</LegendItem>
      </Legend>
    </Chart>
  );
}

function BrandTable() {
  return (
    <TableWrap>
      <DataTable>
        <thead>
          <tr>
            <HeadCell $active>品牌</HeadCell>
            <HeadCell>目标</HeadCell>
            <HeadCell>达成</HeadCell>
          </tr>
        </thead>
        <tbody>
          {brands.map((b, i) => (
            <tr key={b.name}>
              {[b.name, b.target, b.actual].map((value, j) => (
                <Cell key={j} $selected={i < selectedRows} $striped={i % 2 === 1}>{value}</Cell>
              ))}
            </tr>
          ))}
        </tbody>
      </DataTable>
      <Selection />
    </TableWrap>
  );
}

function RibbonGroup({ width, label, bleed, launcher, children, ...body }) {
  return (
    <Group $width={width} $bleed={bleed}>
      <GroupBody {...body}>{children}</GroupBody>
      <GroupLabel $launcher={launcher}>
        {label}
        {launcher && <button aria-label="图表选项"><LauncherIcon /></button>}
      </GroupLabel>
    </Group>
  );
}

const chartButtons = [
  ['柱形图', ColumnIcon], ['层次结构图', TreemapIcon], ['瀑布图', WaterfallIcon],
  ['折线图', LineIcon], ['统计图', HistogramIcon], ['组合图', ComboIcon],
  ['饼图', PieIcon], ['散点图', ScatterIcon],
];

function InsertRibbon() {
  return (
    <Ribbon>
      <RibbonGroup width={210} bleed={83} label="表格" $align="flex-end" $right={6}>
        <Big $width={76} icon={<PivotRecommendIcon />} lines={['推荐的', '数据透视表']} />
        <Big icon={<TableIcon />} lines={['表格']} />
      </RibbonGroup>

      <RibbonGroup width={306} label="插图" $align="flex-start" $left={11}>
        <Big $width={50} icon={<PictureIcon />} lines={['图片']} drop />
        <Stack $width={125} $left={7}>
          <Small icon={<ShapesIcon />} text="形状" drop />
          <Small icon={<BirdIcon />} text="图标" />
          <Small icon={<CubeIcon />} text="3D 模型" split />
        </Stack>
        <Stack>
          <Small icon={<SmartArtIcon />} text="SmartArt" />
          <Small icon={<ScreenshotIcon />} text="屏幕截图" drop />
        </Stack>
      </RibbonGroup>

      <RibbonGroup width={188} label="加载项" $align="space-between" $left={15} $right={16}>
        <Stack $top={6}>
          <Small tall icon={<AddInIcon />} text="获取加载项" />
          <Small tall split icon={<MyAddInIcon />} text="我的加载项" />
        </Stack>
        <Stack>
          <Small icon={<VisioIcon />} label="Visio Data Visualizer" />
          <Small icon={<BingIcon />} label="必应地图" />
          <Small icon={<PeopleGraphIcon />} label="人员图" />
        </Stack>
      </RibbonGroup>

      <RibbonGroup width={364} label="图表" launcher $align="flex-start" $left={10}>
        <Big $width={52} $hover icon={<ChartRecommendIcon />} lines={['推荐的', '图表']}>
          <Pointer><PointerIcon /></Pointer>
        </Big>
        <ChartGrid>
          {chartButtons.map(([name, Icon]) => (
            <Small key={name} icon={<Icon />} label={name} drop />
          ))}
        </ChartGrid>
        <Big $width={40} icon={<GlobeIcon />} lines={['地图']} drop />
        <Big $width={98} icon={<PivotChartIcon />} lines={['数据透视图']} drop />
      </RibbonGroup>

      <RibbonGroup width={72} label="演示">
        <Big icon={<Map3DIcon />} lines={['三维地', '图']} inlineDrop />
      </RibbonGroup>

      <RibbonGroup width={180} label="迷你图">
        <Big
          $width={54}
          icon={<SparkIcon><path d="M7 17l4 4 6-9 6 8 8-9 5 5" stroke={BLUE} /></SparkIcon>}
          lines={['折线']}
        />
        <Big
          $width={54}
          icon={(
            <SparkIcon>
              <path d="M9 15h4v8H9zM17 10h4v13h-4zM25 13h4v10h-4z" fill={SKY} stroke={BLUE} />
            </SparkIcon>
          )}
          lines={['柱形']}
        />
        <Big
          $width={54}
          icon={(
            <SparkIcon>
              <path d="M10 10h2v5h-2zM15 10h2v5h-2zM30 10h2v5h-2z" fill={SKY} stroke="#1f73b8" />
              <path d="M20 17h2v4h-2zM25 17h2v4h-2z" fill={GREY} />
            </SparkIcon>
          )}
          lines={['盈亏']}
        />
      </RibbonGroup>

      <RibbonGroup width={126} label="筛选器">
        <Big $width={54} icon={<SlicerIcon />} lines={['切片器']} />
        <Big $width={54} icon={<TimelineIcon />} lines={['日程表']} />
      </RibbonGroup>

      <RibbonGroup width={72} label="链接">
        <Big icon={<LinkIcon />} lines={['链接']} drop />
      </RibbonGroup>

      <RibbonGroup width={72} label="批注">
        <Big icon={<NewCommentIcon />} lines={['批注']} />
      </RibbonGroup>

      <RibbonGroup width={68}>
        <Big icon={<TextArtIcon />} lines={['文本']} drop />
      </RibbonGroup>

      <RibbonGroup width={111} label="符号" $align="flex-start" $left={15}>
        <Stack>
          <Small icon={<PiIcon />} text="公式" split />
          <Small icon={<OmegaIcon />} text="符号" />
        </Stack>
      </RibbonGroup>
    </Ribbon>
  );
}

export default function App() {
  const [autoSave, setAutoSave] = useState(false);
  const [formula, setFormula] = useState('品牌');
  const [zoom, setZoom] = useState(57);

  return (
    <Page>
      <GlobalStyle />
      <TitleBar>
        <QuickAccess>
          <AutoSave>
            <Text>保存</Text>
            <Switch>
              <input type="checkbox" checked={autoSave} onChange={e => setAutoSave(e.target.checked)} />
              <Text>关</Text>
            </Switch>
          </AutoSave>
          <BarButton $space={12} aria-label="保存文件"><SaveIcon /></BarButton>
          <BarRule />
          <BarButton $space={14} aria-label="撤消"><UndoIcon /><Chevron color="#e4f5ea" /></BarButton>
          <BarButton $space={12} aria-label="恢复"><RedoIcon /><Chevron color="#4fa677" /></BarButton>
          <BarButton $space={15} aria-label="自定义快速访问工具栏"><MoreIcon /></BarButton>
          <BarButton $space={30} $gap={5}>
            <Text>1.2.5 子弹柱形图.xlsx</Text>
            <Chevron size={14} color="#e4f5ea" />
          </BarButton>
        </QuickAccess>
        <SearchBox>
          <SearchIcon />
          <input type="search" placeholder="搜索(Alt+Q)" aria-label="搜索" />
        </SearchBox>
        <Account>
          <Text>260141 260141</Text>
          <Avatar><PersonIcon /></Avatar>
          <PenIcon />
          <Minimize aria-label="最小化" />
        </Account>
      </TitleBar>

      <TabBar>
        <Tabs>
          {tabs.map(t => <Tab key={t} $active={t === '插入'}>{t}</Tab>)}
        </Tabs>
        <TabActions>
          <CommentsButton><CommentIcon /><Text>批注</Text></CommentsButton>
          <ShareButton aria-label="共享" />
        </TabActions>
      </TabBar>

      <InsertRibbon />

      <FormulaBar>
        <NameBox><Chevron size={15} /></NameBox>
        <Grip $margin="10px 11px 0 11px" />
        <FormulaTools>
          <Svg w={18} stroke="#b5b5b5"><path d="M2 2l14 14M16 2 2 16" /></Svg>
          <Svg w={20} h={18} stroke="#b5b5b5"><path d="M1 9l6 6L19 3" /></Svg>
          <Fx>fx</Fx>
        </FormulaTools>
        <FormulaInput aria-label="编辑栏" value={formula} onChange={e => setFormula(e.target.value)} />
      </FormulaBar>

      <ColumnHeads>
        {columns.map(([name, width], i) => (
          <ColumnHead key={name} $width={width} $selected={i < 3}>{name}</ColumnHead>
        ))}
      </ColumnHeads>

      <Sheet>
        <SheetTitle>子弹柱形图</SheetTitle>
        <BrandTable />
        <Note>注：坐标轴</Note>
        <BulletChart />
        <TemplateCard>图表模板</TemplateCard>
      </Sheet>

      <SheetBar>
        <SheetTab><span>sheet1</span></SheetTab>
        <TabRule />
        <RedTab>晒书包Excel 江流老师</RedTab>
        <TabRule />
        <AddSheet aria-label="新工作表">
          <Svg w={14} stroke="#333" strokeWidth="1.500"><path d="M7 0v14M0 7h14" /></Svg>
        </AddSheet>
        <ScrollArea>
          <Grip $margin="0 26px 0 0" />
          <ScrollArrow aria-label="向左滚动" />
          <ScrollThumb />
        </ScrollArea>
      </SheetBar>

      <StatusBar>
        <Access><AccessIcon /><Text>辅助功能: 调查</Text></Access>
        <Stats $space={42}><Text>平均值: 426</Text></Stats>
        <Stats $space={22}><Text>计数: 18</Text></Stats>
        <Stats $space={24}><Text>求和: 4260</Text></Stats>
        <ViewButton $active aria-label="普通">
          <Svg w={18} h={18} stroke="#333"><path d="M1 1h16v16H1zM1 6.300h16M1 11.600h16M6.300 1v16M11.600 1v16" /></Svg>
        </ViewButton>
        <ViewButton aria-label="页面布局">
          <Svg w={18} h={18} stroke="#333"><path d="M1 1h16v16H1zM4.500 4h9v10h-9zM6.500 6.500h5M6.500 9h5M6.500 11.500h5" /></Svg>
        </ViewButton>
        <ViewButton aria-label="分页预览">
          <Svg w={18} h={18} stroke="#333"><path d="M1 1h16v16H1zM1 11h11V1M6.500 1v10" /></Svg>
        </ViewButton>
        <ZoomOut aria-label="缩小" />
        <Zoom type="range" aria-label="缩放" value={zoom} onChange={e => setZoom(Number(e.target.value))} />
      </StatusBar>

      <InputBar>
        <Logo><SogouLogo /></Logo>
        <InputTools>
          中
          <PunctIcon />
          <MicIcon />
          <KeyboardIcon />
          <ShirtIcon />
          <AppsIcon />
        </InputTools>
      </InputBar>
    </Page>
  );
}
